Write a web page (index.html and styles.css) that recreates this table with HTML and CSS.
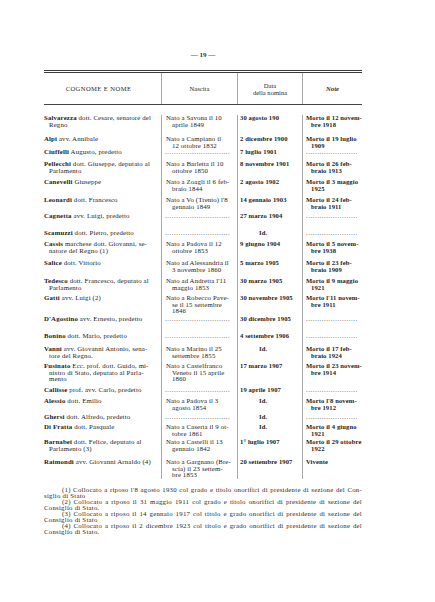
FILE: index.html
```html
<!DOCTYPE html>
<html lang="it">
<head>
<meta charset="utf-8">
<title>Pagina 19</title>
<link rel="stylesheet" href="styles.css">
</head>
<body>
<div class="page">
  <div class="folio">— 19 —</div>
  <div class="table">
    <div class="thead">
      <div class="hc c1">COGNOME E NOME</div>
      <div class="hc c2">Nascita</div>
      <div class="hc c3">Data<br>della nomina</div>
      <div class="hc c4"><i>Note</i></div>
    </div>
    <div class="tbody">
      <div class="row h21">
        <div class="n"><b>Salvarezza</b> dott. Cesare, senatore del<br>Regno</div>
        <div class="b">Nato a Savona il 10<br>aprile 1849</div>
        <div class="d">30 agosto 190</div>
        <div class="o">Morto il 12 novem-<br>bre 1918</div>
      </div>
      <div class="row h13">
        <div class="n"><b>Alpi</b> avv. Annibale</div>
        <div class="b">Nato a Campiano il<br>12 ottobre 1832</div>
        <div class="d">2 dicembre 1900</div>
        <div class="o">Morto il 19 luglio<br>1909</div>
      </div>
      <div class="row h12">
        <div class="n"><b>Ciuffelli</b> Augusto, predetto</div>
        <div class="b dots">.............................</div>
        <div class="d">7 luglio 1901</div>
        <div class="o dots">.......................</div>
      </div>
      <div class="row h18">
        <div class="n"><b>Pellecchi</b> dott. Giuseppe, deputato al<br>Parlamento</div>
        <div class="b">Nato a Barletta il 10<br>ottobre 1850</div>
        <div class="d">8 novembre 1901</div>
        <div class="o">Morto il 26 feb-<br>braio 1913</div>
      </div>
      <div class="row h18">
        <div class="n"><b>Canevelli</b> Giuseppe</div>
        <div class="b">Nato a Zoagli il 6 feb-<br>braio 1844</div>
        <div class="d">2 agosto 1902</div>
        <div class="o">Morto il 3 maggio<br>1925</div>
      </div>
      <div class="row h16">
        <div class="n"><b>Leonardi</b> dott. Francesco</div>
        <div class="b">Nato a Vo (Trento) l'8<br>gennaio 1849</div>
        <div class="d">14 gennaio 1903</div>
        <div class="o">Morto il 24 feb-<br>braio 1911</div>
      </div>
      <div class="row h17">
        <div class="n"><b>Cagnetta</b> avv. Luigi, predetto</div>
        <div class="b dots">.............................</div>
        <div class="d">27 marzo 1904</div>
        <div class="o dots">.......................</div>
      </div>
      <div class="row h11">
        <div class="n"><b>Scamuzzi</b> dott. Pietro, predetto</div>
        <div class="b dots">.............................</div>
        <div class="d id">Id.</div>
        <div class="o dots">.......................</div>
      </div>
      <div class="row h19">
        <div class="n"><b>Cassis</b> marchese dott. Giovanni, se-<br>natore del Regno (1)</div>
        <div class="b">Nato a Padova il 12<br>ottobre 1853</div>
        <div class="d">9 giugno 1904</div>
        <div class="o">Morto il 5 novem-<br>bre 1938</div>
      </div>
      <div class="row h18">
        <div class="n"><b>Salice</b> dott. Vittorio</div>
        <div class="b">Nato ad Alessandria il<br>3 novembre 1860</div>
        <div class="d">5 marzo 1905</div>
        <div class="o">Morto il 23 feb-<br>braio 1909</div>
      </div>
      <div class="row h17">
        <div class="n"><b>Tedesco</b> dott. Francesco, deputato al<br>Parlamento</div>
        <div class="b">Nato ad Andretta l'11<br>maggio 1853</div>
        <div class="d">30 marzo 1905</div>
        <div class="o">Morto il 9 maggio<br>1921</div>
      </div>
      <div class="row h21">
        <div class="n"><b>Gatti</b> avv. Luigi (2)</div>
        <div class="b">Nato a Robecco Pave-<br>se il 15 settembre<br>1846</div>
        <div class="d">30 novembre 1905</div>
        <div class="o">Morto l'11 novem-<br>bre 1911</div>
      </div>
      <div class="row h17">
        <div class="n"><b>D'Agostino</b> avv. Ernesto, predetto</div>
        <div class="b dots">.............................</div>
        <div class="d">30 dicembre 1905</div>
        <div class="o dots">.......................</div>
      </div>
      <div class="row h13">
        <div class="n"><b>Bonino</b> dott. Mario, predetto</div>
        <div class="b dots">.............................</div>
        <div class="d">4 settembre 1906</div>
        <div class="o dots">.......................</div>
      </div>
      <div class="row h17">
        <div class="n"><b>Vanni</b> avv. Giovanni Antonio, sena-<br>tore del Regno.</div>
        <div class="b">Nato a Marino il 25<br>settembre 1855</div>
        <div class="d id">Id.</div>
        <div class="o">Morto il 17 feb-<br>braio 1924</div>
      </div>
      <div class="row h24">
        <div class="n"><b>Fusinato</b> Ecc. prof. dott. Guido, mi-<br>nistro di Stato, deputato al Parla-<br>mento</div>
        <div class="b">Nato a Castelfranco<br>Veneto il 15 aprile<br>1860</div>
        <div class="d">17 marzo 1907</div>
        <div class="o">Morto il 23 novem-<br>bre 1914</div>
      </div>
      <div class="row h11">
        <div class="n"><b>Callisse</b> prof. avv. Carlo, predetto</div>
        <div class="b dots">.............................</div>
        <div class="d">19 aprile 1907</div>
        <div class="o dots">.......................</div>
      </div>
      <div class="row h16">
        <div class="n"><b>Alessio</b> dott. Emilio</div>
        <div class="b">Nato a Padova il 3<br>agosto 1854</div>
        <div class="d id">Id.</div>
        <div class="o">Morto l'8 novem-<br>bre 1912</div>
      </div>
      <div class="row h10">
        <div class="n"><b>Ghersi</b> dott. Alfredo, predetto</div>
        <div class="b dots">.............................</div>
        <div class="d id">Id.</div>
        <div class="o dots">.......................</div>
      </div>
      <div class="row h15">
        <div class="n"><b>Di Fratta</b> dott. Pasquale</div>
        <div class="b">Nato a Caserta il 9 ot-<br>tobre 1861</div>
        <div class="d id">Id.</div>
        <div class="o">Morto il 4 giugno<br>1921</div>
      </div>
      <div class="row h20">
        <div class="n"><b>Barnabei</b> dott. Felice, deputato al<br>Parlamento (3)</div>
        <div class="b">Nato a Castelli il 13<br>gennaio 1842</div>
        <div class="d">1° luglio 1907</div>
        <div class="o">Morto il 29 ottobre<br>1922</div>
      </div>
      <div class="row h18">
        <div class="n"><b>Raimondi</b> avv. Giovanni Arnaldo (4)</div>
        <div class="b">Nato a Gargnano (Bre-<br>scia) il 23 settem-<br>bre 1853</div>
        <div class="d">20 settembre 1907</div>
        <div class="o">Vivente</div>
      </div>
    </div>
  </div>
  <div class="notes">
    <p><span class="jl">(1) Collocato a riposo l'8 agosto 1930 col grado e titolo onorifici di presidente di sezione del Con-</span><span class="ll">siglio di Stato</span></p>
    <p><span class="jl">(2) Collocato a riposo il 31 maggio 1911 col grado e titolo onorifici di presidente di sezione del</span><span class="ll">Consiglio di Stato.</span></p>
    <p><span class="jl">(3) Collocato a riposo il 14 gennaio 1917 col titolo e grado onorifici di presidente di sezione del</span><span class="ll">Consiglio di Stato</span></p>
    <p><span class="jl">(4) Collocato a riposo il 2 dicembre 1923 col titolo e grado onorifici di presidente di sezione del</span><span class="ll">Consiglio di Stato.</span></p>
  </div>
</div>
</body>
</html>
```

FILE: styles.css
```css
html, body {
  margin: 0;
  padding: 0;
  background: #ffffff;
}

body {
  font-family: "Liberation Serif", "Times New Roman", serif;
  color: #1c1c1c;
  font-size: 6.6px;
  width: 435px;
  height: 602px;
  overflow: hidden;
}

.page {
  padding-left: 44px;
  width: 318px;
}

.folio {
  padding-top: 51px;
  height: 8px;
  line-height: 8px;
  text-align: center;
  font-size: 7px;
  font-weight: bold;
  color: #333;
}

.table {
  margin-top: 11px;
  border-top: 3px double #3a3a3a;
}

.thead,
.row {
  display: grid;
  grid-template-columns: 117px 76px 65px 60px;
}

.thead {
  height: 31px;
  border-bottom: 1px solid #444;
}

.hc {
  display: flex;
  align-items: center;
  justify-content: center;
  text-align: center;
  line-height: 7px;
  font-size: 6.6px;
  color: #2a2a2a;
}

.hc.c1 {
  letter-spacing: 0.4px;
  padding-right: 8px;
}

.hc.c2,
.hc.c3,
.hc.c4,
.row > div + div {
  border-left: 1px solid #a8a8a8;
}

.hc.c4 i {
  font-weight: bold;
}

.tbody {
  padding-top: 10px;
  padding-bottom: 0;
}

.row > div {
  line-height: 6.7px;
  white-space: nowrap;
}

.h10 { height: 10px; }
.h11 { height: 11px; }
.h12 { height: 12px; }
.h13 { height: 13px; }
.h15 { height: 15px; }
.h16 { height: 16px; }
.h17 { height: 17px; }
.h18 { height: 18px; }
.h19 { height: 19px; }
.h20 { height: 20px; }
.h21 { height: 21px; }
.h24 { height: 24px; }

.row .n {
  padding-left: 5px;
  text-indent: -5px;
  font-size: 6.8px;
  letter-spacing: 0.15px;
}

.row .b {
  padding-left: 10px;
  text-indent: -6px;
  font-size: 6.8px;
  letter-spacing: 0.12px;
}

.row .d {
  padding-left: 2px;
  font-weight: bold;
  letter-spacing: 0.1px;
}

.row .d.id {
  padding-left: 21px;
}

.row .o {
  padding-left: 8px;
  text-indent: -5px;
  font-weight: bold;
  letter-spacing: 0.1px;
}

.row .dots {
  letter-spacing: 0.6px;
  padding-left: 3px;
  text-indent: 0;
  font-size: 6.6px;
  font-weight: normal;
  color: #555;
}

.row .o.dots {
  padding-left: 3px;
}

.notes {
  margin-top: 10px;
  font-size: 6.8px;
  line-height: 6px;
  letter-spacing: 0.25px;
  color: #2a2a2a;
}

.notes p {
  margin: 0;
}

.notes .jl {
  display: block;
  text-indent: 18px;
  text-align: justify;
  text-align-last: justify;
}

.notes .ll {
  display: block;
}
```
